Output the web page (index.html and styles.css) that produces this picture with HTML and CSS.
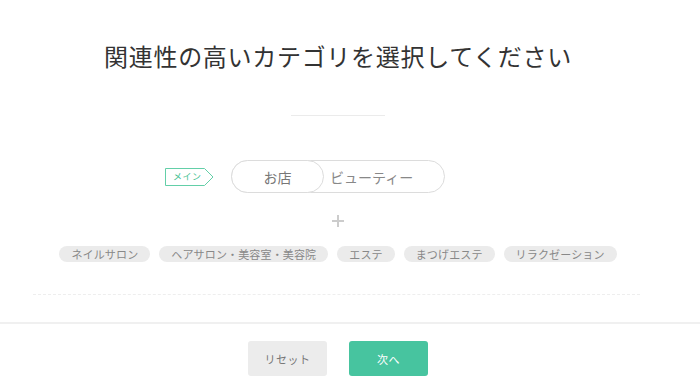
FILE: index.html
```html
<!DOCTYPE html>
<html lang="ja">
<head>
<meta charset="utf-8">
<title>カテゴリ選択</title>
<link rel="stylesheet" href="styles.css">
</head>
<body>
<div class="page">
  <main class="content">
    <h1 class="title">関連性の高いカテゴリを選択してください</h1>
    <div class="divider"></div>
    <div class="main-row">
      <div class="tag">
        <svg class="tag-shape" width="49" height="18" viewBox="0 0 49 18"><polygon points="0.5,0.5 39.5,0.5 48,9 39.5,17.5 0.5,17.5" fill="none" stroke="#63cfa8" stroke-width="1"/></svg>
        <span class="tag-text">メイン</span>
      </div>
      <div class="switch">
        <span class="seg seg-on">お店</span>
        <span class="seg seg-off">ビューティー</span>
      </div>
      <div></div>
    </div>
    <div class="plus">
      <svg width="12" height="12" viewBox="0 0 12 12"><path d="M6 0V12M0 6H12" stroke="#cccccc" stroke-width="2"/></svg>
    </div>
    <ul class="chips">
      <li class="chip">ネイルサロン</li>
      <li class="chip">ヘアサロン・美容室・美容院</li>
      <li class="chip">エステ</li>
      <li class="chip">まつげエステ</li>
      <li class="chip">リラクゼーション</li>
    </ul>
    <div class="dashed"></div>
  </main>
  <footer class="footer">
    <div class="actions">
      <button class="btn btn-reset">リセット</button>
      <button class="btn btn-next">次へ</button>
    </div>
  </footer>
</div>
</body>
</html>
```

FILE: styles.css
```css
* { box-sizing: border-box; }
html, body { margin: 0; padding: 0; background: #fff; }
body {
  font-family: "Noto Sans CJK JP", "Noto Sans", sans-serif;
  color: #333;
  width: 700px;
}
.content { width: 676px; }
.title {
  margin: 40px 0 0;
  font-size: 24px;
  line-height: 32px;
  font-weight: 400;
  letter-spacing: 0.7px;
  text-align: center;
  color: #333;
}
.divider {
  width: 94px;
  height: 1px;
  background: #ebebeb;
  margin: 43px auto 0;
}
.main-row {
  margin-top: 44px;
  display: grid;
  grid-template-columns: 1fr auto 1fr;
  align-items: center;
}
.tag {
  justify-self: end;
  margin-right: 17px;
  position: relative;
  width: 49px;
  height: 18px;
  display: flex;
  align-items: center;
  padding-left: 8px;
}
.tag-shape { position: absolute; left: 0; top: 0; }
.tag-text {
  position: relative;
  font-size: 9px;
  line-height: 18px;
  color: #3fbf92;
  letter-spacing: 0.5px;
}
.switch {
  width: 214px;
  height: 33px;
  border: 1px solid #dcdcdc;
  border-radius: 17px;
  display: flex;
  align-items: stretch;
}
.seg {
  font-size: 14px;
  color: #777;
  display: flex;
  align-items: center;
}
.seg-on {
  width: 93px;
  margin: -1px 0 -1px -1px;
  border: 1px solid #dcdcdc;
  border-radius: 17px;
  justify-content: center;
  background: #fff;
}
.seg-off {
  flex: 1;
  padding-left: 6px;
  color: #888;
}
.plus {
  height: 20px;
  margin-top: 18px;
  display: flex;
  align-items: center;
  justify-content: center;
}
.chips {
  list-style: none;
  margin: 15px 0 0;
  padding: 0;
  display: flex;
  justify-content: center;
  gap: 9px;
}
.chip {
  height: 16px;
  line-height: 16px;
  padding: 0 12px;
  border-radius: 8px;
  background: #ebebeb;
  color: #888;
  font-size: 11px;
  letter-spacing: 0.15px;
}
.dashed {
  margin: 32px 36px 0 33px;
  border-top: 1px dashed #eeeeee;
}
.footer {
  margin-top: 27px;
  border-top: 2px solid #f0f0f0;
  padding-top: 17px;
}
.actions {
  width: 676px;
  display: flex;
  justify-content: center;
  gap: 22px;
}
.btn {
  width: 79px;
  height: 35px;
  border: none;
  border-radius: 3px;
  font-family: inherit;
  font-size: 11px;
  letter-spacing: 0.5px;
  padding: 0;
}
.btn-reset { background: #ececec; color: #777; }
.btn-next { background: #47c49f; color: #fff; }
```
